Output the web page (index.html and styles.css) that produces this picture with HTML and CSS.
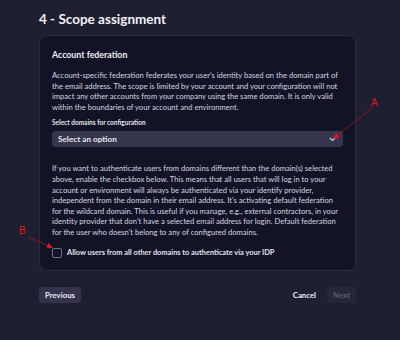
FILE: index.html
```html
<!DOCTYPE html>
<html lang="en">
<head>
<meta charset="utf-8">
<title>Scope assignment</title>
<link rel="stylesheet" href="styles.css">
</head>
<body>
<div class="page">
  <h1 class="title">4 - Scope assignment</h1>
  <section class="card">
    <h2 class="card-title">Account federation</h2>
    <p class="text">Account-specific federation federates your user's identity based on the domain part of the email address. The scope is limited by your account and your configuration will not impact any other accounts from your company using the same domain. It is only valid within the boundaries of your account and environment.</p>
    <label class="field-label">Select domains for configuration</label>
    <div class="select">
      <span>Select an option</span>
      <svg class="chev" width="7" height="5" viewBox="0 0 7 5"><path d="M1 1l2.5 2.5L6 1" fill="none" stroke="#c8c9d6" stroke-width="1.2"/></svg>
    </div>
    <p class="text text-2">If you want to authenticate users from domains different than the domain(s) selected above, enable the checkbox below. This means that all users that will log in to your account or environment will always be authenticated via your identify provider, independent from the domain in their email address. It's activating default federation for the wildcard domain. This is useful if you manage, e.g., external contractors, in your identity provider that don't have a selected email address for login. Default federation for the user who doesn't belong to any of configured domains.</p>
    <div class="check-row">
      <span class="checkbox"></span>
      <span class="check-label">Allow users from all other domains to authenticate via your IDP</span>
    </div>
  </section>
  <div class="actions">
    <button class="btn btn-secondary">Previous</button>
    <div class="actions-right">
      <button class="btn btn-ghost">Cancel</button>
      <button class="btn btn-disabled">Next</button>
    </div>
  </div>
</div>
<svg class="annotations" width="400" height="340" viewBox="0 0 400 340">
  <defs>
    <marker id="arr" markerWidth="6" markerHeight="6" refX="5" refY="3" orient="auto" markerUnits="userSpaceOnUse">
      <path d="M0 0L6 3L0 6z" fill="#e8101a"/>
    </marker>
  </defs>
  <text x="371" y="106" class="anno">A</text>
  <line x1="372" y1="108" x2="334" y2="138" stroke="#b0101a" stroke-width="0.8" marker-end="url(#arr)"/>
  <text x="19" y="233.5" class="anno">B</text>
  <line x1="28" y1="237" x2="52" y2="247.5" stroke="#b0101a" stroke-width="0.8" marker-end="url(#arr)"/>
</svg>
</body>
</html>
```
FILE: styles.css
```css
html, body {
  margin: 0;
  padding: 0;
  background: #1e1f30;
}
body {
  font-family: "Lato", "Noto Sans", sans-serif;
  color: #d9dae4;
  width: 400px;
  height: 340px;
  overflow: hidden;
}
.page {
  padding: 10px 44px 0 39px;
}
.title {
  margin: 0 0 7px;
  font-size: 13.5px;
  line-height: 18px;
  font-weight: 700;
  color: #f1f1f6;
}
.card {
  background: #121326;
  border: 1px solid #2a2b40;
  border-radius: 8px;
  padding: 13px 12px 12px 12px;
}
.card-title {
  margin: 0 0 9px;
  font-size: 8.8px;
  line-height: 12px;
  font-weight: 700;
  color: #eeeef4;
}
.text {
  margin: 0;
  font-size: 7.6px;
  line-height: 10.6px;
  color: #d4d5e0;
}
.text-2 {
  margin-top: 16px;
}
.field-label {
  display: block;
  margin-top: 6px;
  font-size: 6.5px;
  line-height: 10px;
  font-weight: 700;
  color: #e2e3ea;
}
.select {
  margin-top: 3px;
  height: 16px;
  background: #35364d;
  border-radius: 4px;
  display: flex;
  align-items: center;
  justify-content: space-between;
  padding: 0 7px 0 6px;
  font-size: 8.2px;
  font-weight: 700;
  color: #e6e7ee;
}
.chev {
  display: block;
}
.check-row {
  display: flex;
  align-items: center;
  gap: 5px;
  margin-top: 10px;
}
.checkbox {
  width: 8px;
  height: 8px;
  border: 1px solid #6e6f84;
  border-radius: 2px;
}
.check-label {
  font-size: 7.4px;
  line-height: 10px;
  font-weight: 700;
  color: #e2e3ea;
}
.actions {
  margin-top: 16px;
  display: flex;
  justify-content: space-between;
  align-items: center;
  width: 317px;
}
.actions-right {
  display: flex;
  gap: 5px;
}
.btn {
  height: 16px;
  border: none;
  border-radius: 3px;
  padding: 0 6px;
  font-family: inherit;
  font-size: 7.8px;
  font-weight: 700;
  line-height: 16px;
}
.btn-secondary {
  background: #33344b;
  color: #e8e9f0;
}
.btn-ghost {
  background: transparent;
  color: #eeeef4;
}
.btn-disabled {
  background: #26273a;
  color: #5c5d72;
}
.annotations {
  position: absolute;
  left: 0;
  top: 0;
}
.anno {
  font-family: "Liberation Sans", sans-serif;
  font-size: 10px;
  fill: #e8101a;
}
```
